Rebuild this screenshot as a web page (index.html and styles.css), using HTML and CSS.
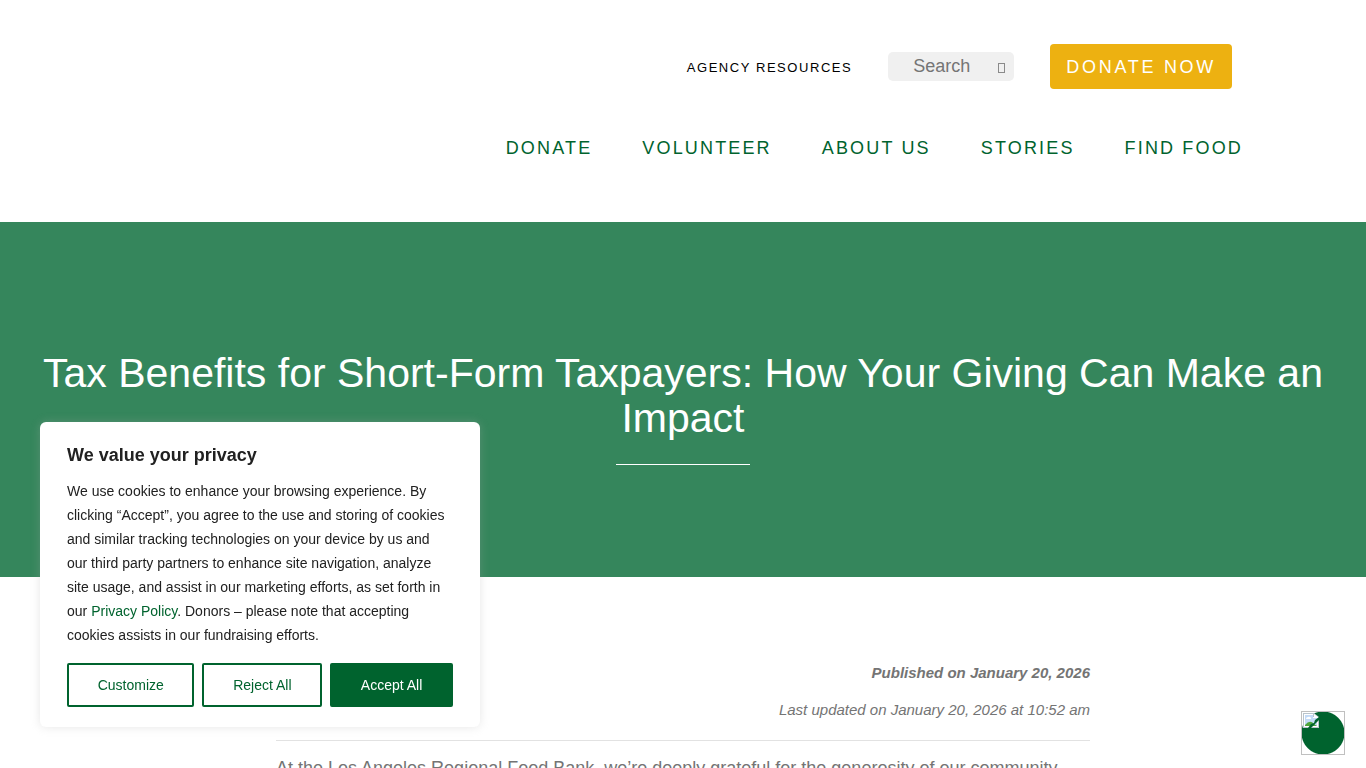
FILE: index.html
```
<!DOCTYPE html>
<html lang="en">
<head>
    <meta charset="UTF-8">
    <meta name="viewport" content="width=device-width, initial-scale=1.0">
    <title>Tax Benefits for Short-Form Taxpayers - Los Angeles Regional Food Bank</title>
    <link rel="stylesheet" href="styles.css">
</head>
<body>
    <header class="site-header">
        <div class="top-bar">
            <a class="agency-link" href="#">AGENCY RESOURCES</a>
            <form class="search-form" role="search">
                <input type="search" placeholder="Search" aria-label="Search">
                <button type="submit" aria-label="Submit search"><span class="search-icon"></span></button>
            </form>
            <a class="donate-button" href="#">DONATE NOW</a>
        </div>
        <nav class="main-nav">
            <a href="#">DONATE</a>
            <a href="#">VOLUNTEER</a>
            <a href="#">ABOUT US</a>
            <a href="#">STORIES</a>
            <a href="#">FIND FOOD</a>
        </nav>
    </header>

    <section class="hero">
        <h1>Tax Benefits for Short-Form Taxpayers: How Your Giving Can Make an Impact</h1>
        <hr>
    </section>

    <main class="article">
        <div class="dates">
            <p><strong>Published on January 20, 2026</strong></p>
            <p>Last updated on January 20, 2026 at 10:52 am</p>
        </div>
        <p>At the Los Angeles Regional Food Bank, we’re deeply grateful for the generosity of our community</p>
    </main>

    <!-- cookie notice -->
    <div class="cookie-box" role="dialog" aria-labelledby="cookieTitle">
        <h2 id="cookieTitle">We value your privacy</h2>
        <p>We use cookies to enhance your browsing experience. By clicking “Accept”, you agree to the use and storing of cookies and similar tracking technologies on your device by us and our third party partners to enhance site navigation, analyze site usage, and assist in our marketing efforts, as set forth in our <a href="#">Privacy Policy</a>. Donors – please note that accepting cookies assists in our fundraising efforts.</p>
        <div class="cookie-buttons">
            <button type="button">Customize</button>
            <button type="button">Reject All</button>
            <button type="button" class="accept">Accept All</button>
        </div>
    </div>

    <button type="button" class="widget" aria-label="Cookie settings">
        <svg width="16" height="16" viewBox="0 0 16 16">
            <path d="M0 1h11l5 4v11H0z" fill="#b9c4cc"/>
            <path d="M1 2h9v3h5v10H1z" fill="#fff"/>
            <path d="M2 3h8v3h4v8H2z" fill="#c3daf6"/>
            <path d="M3 7a2 2 0 0 1 2-2 2 2 0 0 1 3 2z" fill="#fff"/>
            <path d="M2 14v-1q5-6 9-1l3 2z" fill="#4fa63a"/>
            <path d="M11 2v3h4z" fill="#fff"/>
            <path d="M16 5v3L8 16H5l3-4 3-1 1-3z" fill="#00632e"/>
        </svg>
    </button>
</body>
</html>
```

FILE: styles.css
```
* { box-sizing: border-box; }

body { margin: 0; font-family: "Liberation Sans", Arial, sans-serif; font-size: 18px; color: #747474; background: #fff; }
a { text-decoration: none; }

.site-header { padding: 44px 122px 60px; }
.top-bar { display: flex; justify-content: flex-end; align-items: center; gap: 36px; padding-right: 12px; }
.agency-link { padding-top: 2px; color: #000; font-size: 13px; letter-spacing: 0.12em; }

.search-form { display: flex; align-items: center; width: 126px; height: 29px; background: #f0f0f0; border-radius: 5px; }
.search-form input {
    flex: 1;
    min-width: 0;
    padding: 0 0 0 25px;
    border: none;
    background: none;
    font-family: inherit;
    font-size: 18px;
}
.search-form input::placeholder { color: #757575; }
.search-form button { padding: 3px 9px 0; border: none; background: none; cursor: pointer; }
.search-icon { display: block; width: 7px; height: 10px; border: 1px solid #8a8a8a; }

.donate-button {
    padding: 13px 16px 11px;
    background: #edb111;
    border-radius: 4px;
    color: #fff;
    line-height: 21px;
    letter-spacing: 0.15em;
}

.main-nav { display: flex; justify-content: flex-end; gap: 50px; padding: 46px 1px 0 0; }
.main-nav a { color: #00632e; line-height: 27px; letter-spacing: 0.12em; }

.hero { padding: 129px 40px 112px; background: #35865c; text-align: center; }
.hero h1 { margin: 0; color: #fff; font-size: 41px; font-weight: normal; line-height: 45px; }
.hero hr { width: 134px; height: 1px; margin: 23px auto 0; border: none; background: #fff; }

.article { max-width: 814px; margin: 0 auto; padding: 84px 0 40px; line-height: 32px; }
.article p { margin: 0; }
.dates { padding-bottom: 18px; margin-bottom: 11px; border-bottom: 1px solid #e2e2e2; font-size: 15px; font-style: italic; line-height: 24px; text-align: right; }
.dates p + p { margin-top: 13px; }

.cookie-box {
    position: fixed;
    left: 40px;
    bottom: 41px;
    width: 440px;
    padding: 20px 27px;
    background: #fff;
    border-radius: 6px;
    box-shadow: 0 0 10px rgba(172, 171, 171, 0.3);
    color: #212121;
}
.cookie-box h2 { margin: 0 0 11px; font-size: 18px; line-height: 26px; }
.cookie-box p { margin: 0 0 16px; font-size: 14px; line-height: 24px; }
.cookie-box a { color: #00632e; }
.cookie-buttons { display: flex; gap: 8px; }
.cookie-buttons button {
    flex: 1 1 auto;
    height: 44px;
    padding: 0 27px;
    border: 2px solid #00632e;
    border-radius: 2px;
    background: #fff;
    color: #00632e;
    font-family: inherit;
    font-size: 14px;
    white-space: nowrap;
    cursor: pointer;
}
.cookie-buttons .accept { background: #00632e; color: #fff; }

.widget {
    position: fixed;
    right: 21px;
    bottom: 13px;
    display: flex;
    width: 44px;
    height: 44px;
    padding: 0 1px;
    border: 1px solid #c0c0c0;
    background: radial-gradient(circle, #00632e 21px, #fff 22px);
    cursor: pointer;
}
```
